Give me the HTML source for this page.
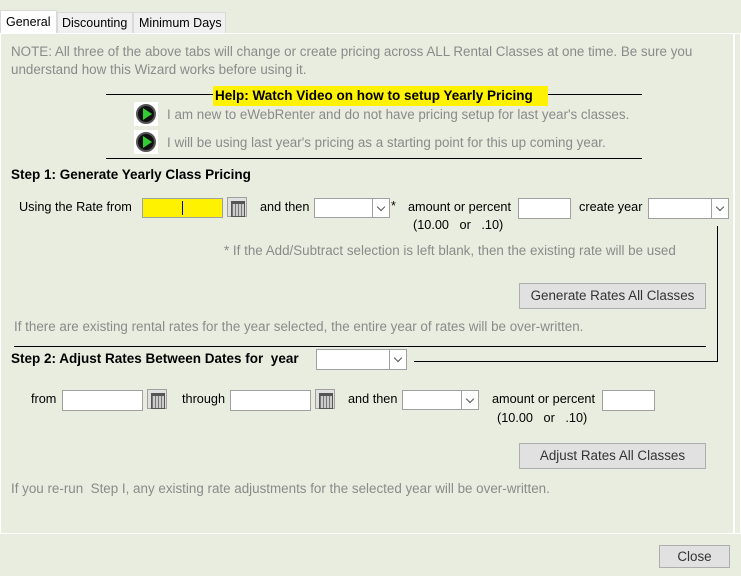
<!DOCTYPE html>
<html><head><style>
*{box-sizing:border-box;margin:0;padding:0}
body{width:741px;height:576px;background:#e9eddf;position:relative;overflow:hidden;font-family:"Liberation Sans",sans-serif;font-size:12.7px;color:#000}
.a{position:absolute;white-space:nowrap}
.g{color:#8a8a8a;font-size:13.4px}
.b{font-weight:bold;font-size:13.5px}
.in{position:absolute;background:#fff;border:1px solid #a0a0a0}
.dd{position:absolute;background:#fff;border:1px solid #a0a0a0}
.dd:after{content:"";position:absolute;right:0;top:0;width:16px;height:100%;border-left:1px solid #a0a0a0;background:#fff}
.dd i{position:absolute;right:5px;top:5px;width:6px;height:6px;border-right:1px solid #555;border-bottom:1px solid #555;transform:rotate(45deg);z-index:2}
.cal{position:absolute;width:20px;height:20px;background:#e0e0e0;border:1px solid #a0a0a0}
.cal:after{content:"";position:absolute;left:3px;top:3px;width:12px;height:12px;background:repeating-linear-gradient(90deg,#777 0 1px,#ccc 1px 3px);border:1px solid #555;border-top-width:3px}
.btn{position:absolute;background:#e1e1e1;border:1px solid #adadad;color:#333;font-size:13.4px;text-align:center}
.ln{position:absolute;background:#000}
.play{position:absolute;width:24px;height:24px;background:#fff}
.play:before{content:"";position:absolute;left:2px;top:2px;width:16px;height:16px;border-radius:50%;background:#111;border:2px solid #555}
.play:after{content:"";position:absolute;left:9px;top:6px;border-left:9px solid #3c3;border-top:6px solid transparent;border-bottom:6px solid transparent}
</style></head><body>
<div class="a" style="left:0;top:10px;width:57px;height:24px;background:#fff;border:1px solid #d9d9d9;border-bottom:none;padding:4px 0 0 5px;font-size:12.5px">General</div>
<div class="a" style="left:57px;top:12px;width:76px;height:22px;background:#f0f0f0;border:1px solid #d9d9d9;padding:3px 0 0 4px;font-size:12.5px">Discounting</div>
<div class="a" style="left:133px;top:12px;width:93px;height:22px;background:#f0f0f0;border:1px solid #d9d9d9;padding:3px 0 0 5px;font-size:12.5px">Minimum Days</div>
<div class="a" style="left:0;top:33px;width:741px;height:501px;border:1px solid #fff"></div>
<div class="a" style="left:733px;top:33px;width:2px;height:501px;background:#fff"></div>

<div class="a g" style="left:11px;top:43px;line-height:18px">NOTE: All three of the above tabs will change or create pricing across ALL Rental Classes at one time. Be sure you<br>understand how this Wizard works before using it.</div>

<div class="ln" style="left:106px;top:94px;width:536px;height:1px"></div>
<div class="a b" style="left:213px;top:86px;width:335px;height:20px;background:#fff200;padding:2px 0 0 2px">Help: Watch Video on how to setup Yearly Pricing</div>
<div class="play" style="left:134px;top:102px"></div>
<div class="a g" style="left:167px;top:107px">I am new to eWebRenter and do not have pricing setup for last year's classes.</div>
<div class="play" style="left:134px;top:130px"></div>
<div class="a g" style="left:167px;top:135px">I will be using last year's pricing as a starting point for this up coming year.</div>
<div class="ln" style="left:106px;top:158px;width:536px;height:1px"></div>

<div class="a b" style="left:11px;top:167px">Step 1: Generate Yearly Class Pricing</div>
<div class="a" style="left:19px;top:200px">Using the Rate from</div>
<div class="in" style="left:142px;top:198px;width:81px;height:20px;background:#fff200"><div style="position:absolute;left:39px;top:2px;width:1px;height:14px;background:#0000c0"></div></div>
<div class="cal" style="left:227px;top:197px"></div>
<div class="a" style="left:260px;top:200px">and then</div>
<div class="dd" style="left:314px;top:198px;width:76px;height:20px"><i></i></div>
<div class="a" style="left:391px;top:199px">*</div>
<div class="a" style="left:408px;top:200px">amount or percent</div>
<div class="a" style="left:413px;top:218px">(10.00&nbsp;&nbsp;&nbsp;or&nbsp;&nbsp;&nbsp;.10)</div>
<div class="in" style="left:518px;top:198px;width:53px;height:21px"></div>
<div class="a" style="left:579px;top:200px">create year</div>
<div class="dd" style="left:648px;top:198px;width:81px;height:21px"><i></i></div>
<div class="ln" style="left:717px;top:226px;width:1px;height:135px"></div>
<div class="a g" style="left:224px;top:243px">* If the Add/Subtract selection is left blank, then the existing rate will be used</div>
<div class="btn" style="left:519px;top:283px;width:187px;height:26px;line-height:24px">Generate Rates All Classes</div>
<div class="a g" style="left:14px;top:319px">If there are existing rental rates for the year selected, the entire year of rates will be over-written.</div>
<div class="ln" style="left:14px;top:346px;width:692px;height:1px"></div>

<div class="a b" style="left:11px;top:351px">Step 2: Adjust Rates Between Dates for&nbsp; year</div>
<div class="dd" style="left:316px;top:349px;width:91px;height:21px"><i></i></div>
<div class="ln" style="left:414px;top:361px;width:304px;height:1px"></div>

<div class="a" style="left:31px;top:392px">from</div>
<div class="in" style="left:62px;top:390px;width:81px;height:21px"></div>
<div class="cal" style="left:147px;top:389px"></div>
<div class="a" style="left:182px;top:392px">through</div>
<div class="in" style="left:230px;top:390px;width:81px;height:21px"></div>
<div class="cal" style="left:315px;top:389px"></div>
<div class="a" style="left:348px;top:392px">and then</div>
<div class="dd" style="left:402px;top:390px;width:77px;height:20px"><i></i></div>
<div class="a" style="left:492px;top:392px">amount or percent</div>
<div class="a" style="left:497px;top:411px">(10.00&nbsp;&nbsp;&nbsp;or&nbsp;&nbsp;&nbsp;.10)</div>
<div class="in" style="left:602px;top:390px;width:53px;height:21px"></div>
<div class="btn" style="left:519px;top:443px;width:187px;height:26px;line-height:24px">Adjust Rates All Classes</div>
<div class="a g" style="left:11px;top:481px">If you re-run&nbsp; Step I, any existing rate adjustments for the selected year will be over-written.</div>

<div class="btn" style="left:659px;top:545px;width:71px;height:23px;line-height:21px">Close</div>
</body></html>
